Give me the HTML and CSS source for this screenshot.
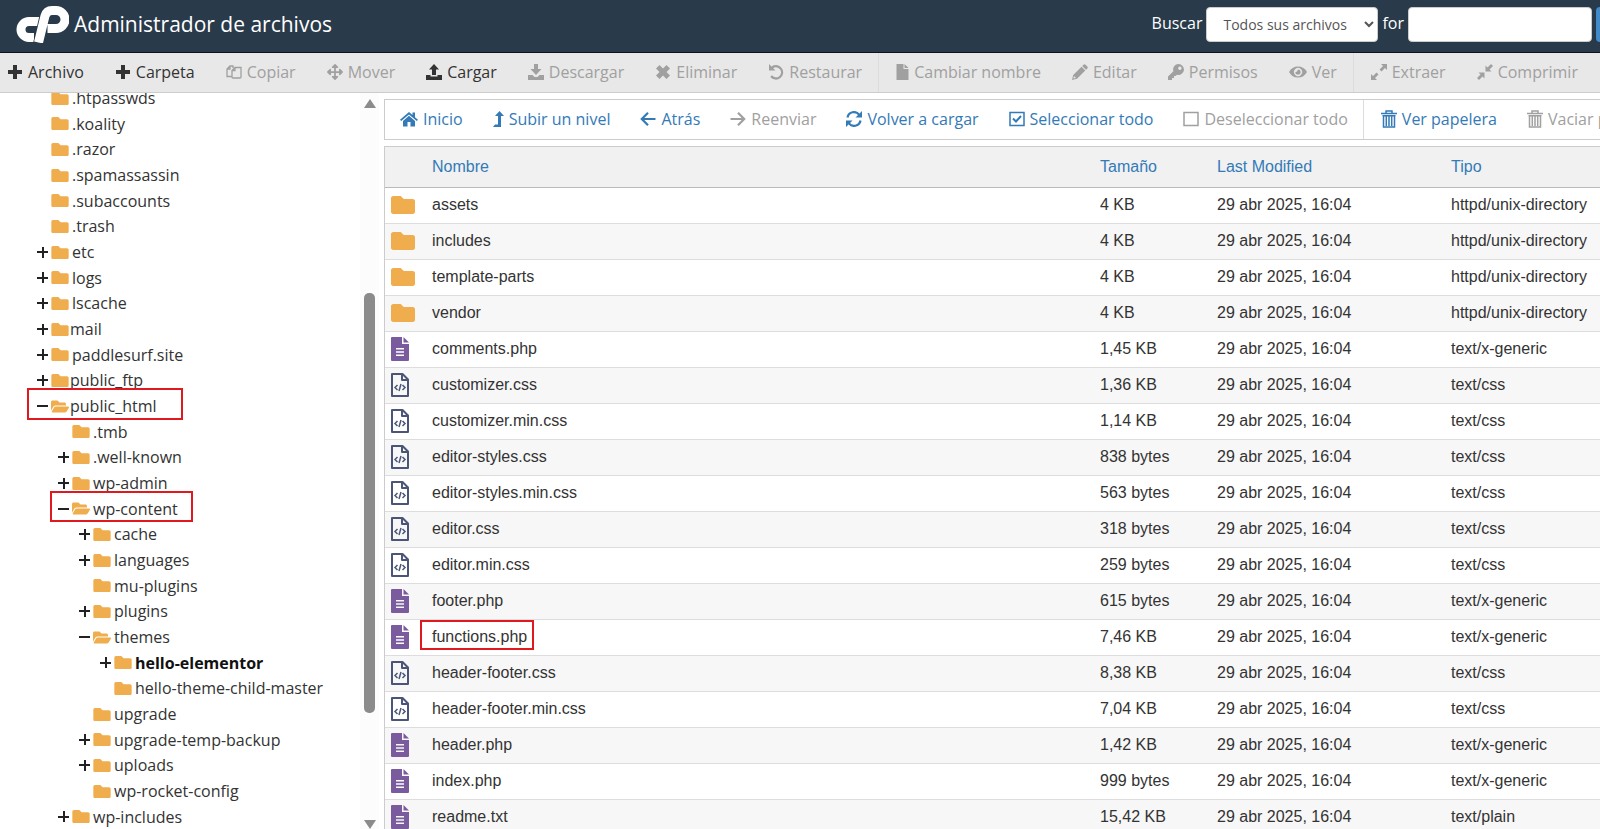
FILE: index.html
```html
<!DOCTYPE html>
<html lang="es">
<head>
  <meta charset="UTF-8">
  <meta name="viewport" content="width=device-width, initial-scale=1.0">
  <title>Administrador de archivos</title>
  <link rel="stylesheet" href="styles.css">
</head>
<body>
  <svg class="sprite" aria-hidden="true">
    <symbol id="plus" viewBox="0 0 16 16"><path d="M6 1h4v5h5v4h-5v5h-4v-5h-5v-4h5z"/></symbol>
    <symbol id="copy" viewBox="0 0 16 16"><path fill="none" stroke="currentColor" stroke-width="1.3" d="M6 12.5H1V5l3-3h3v2M4 2v3H1M9 3.5h6V13q0 1-1 1H7q-1 0-1-1V6.5zM9 3.5v3H6"/></symbol>
    <symbol id="move" viewBox="0 0 512 512"><path d="M352 426l-79 79c-9 9-25 9-34 0l-79-79c-15-15-4-41 17-41h51V284H127v51c0 21-26 32-41 17L7 273c-9-9-9-25 0-34l79-79c15-15 41-4 41 17v51h101V127h-51c-21 0-32-26-17-41l79-79c9-9 25-9 34 0l79 79c15 15 4 41-17 41h-51v101h101v-51c0-21 26-32 41-17l79 79c9 9 9 25 0 34l-79 79c-15 15-41 4-41-17v-51H284v101h51c21 0 32 26 17 41z"/></symbol>
    <symbol id="upload" viewBox="0 0 16 16"><path d="M8 0l5 5.5h-3V11H6V5.5H3zM0 11h4.5v1.5h7V11H16v5H0z"/></symbol>
    <symbol id="download" viewBox="0 0 16 16"><path d="M6 0h4v5h3.5L8 11 2.5 5H6zM0 11h4.5l2 2h3l2-2H16v5H0z"/></symbol>
    <symbol id="times" viewBox="0 0 16 16"><path d="M4.5 1L8 4.5 11.5 1 15 4.5 11.5 8 15 11.5 11.5 15 8 11.5 4.5 15 1 11.5 4.5 8 1 4.5z"/></symbol>
    <symbol id="undo" viewBox="0 0 16 16"><path d="M1 0v6.5h6.5L5.2 4.2A5 5 0 1 1 4 11.3L2.2 12.9A7.3 7.3 0 1 0 3.5 2.5z"/></symbol>
    <symbol id="file" viewBox="0 0 12 16"><path d="M0 0h7v5h5v11H0zM8 0l4 4H8z"/></symbol>
    <symbol id="pencil" viewBox="0 0 16 16"><path d="M11.5.7q1-1 2 0l1.8 1.8q1 1 0 2L14 5.8 10.2 2zM9.5 2.7l3.8 3.8L5 14.8 0 16l1.2-5zM2 12l-.6 2.6L4 14z"/></symbol>
    <symbol id="key" viewBox="0 0 16 16"><path fill-rule="evenodd" d="M10.5 0a5.5 5.5 0 1 1-1.500 10.8L7.5 12H6v2H4v2H0v-3.5l5.4-5.3A5.5 5.5 0 0 1 10.5 0zm1.3 2.5a1.7 1.7 0 1 0 .1 0z"/></symbol>
    <symbol id="eye" viewBox="0 0 18 16"><path fill-rule="evenodd" d="M9 2.5q6 0 9 5.5-3 5.5-9 5.5T0 8q3-5.5 9-5.5zM9 3.8a4.2 4.2 0 1 0 .1 0zM9 5.4a2.6 2.6 0 1 1-2.6 2.6q1.8.4 2.6-2.6z"/></symbol>
    <symbol id="expand" viewBox="0 0 16 16"><path d="M10 0h6v6l-2-2-3.5 3.5-2-2L12 2zM0 16v-6l2 2 3.5-3.5 2 2L4 14l2 2z"/></symbol>
    <symbol id="compress" viewBox="0 0 16 16"><path d="M8.5 7.5v-6l2 2L14 0l2 2-3.5 3.5 2 2zM7.5 8.5v6l-2-2L2 16l-2-2 3.5-3.5-2-2z"/></symbol>
    <symbol id="home" viewBox="0 0 18 16"><path d="M9 1l3.5 3V1.500H15v4.7l3 2.6-1.2 1.3L9 3.4 1.2 10.1 0 8.8zM9 4.8l6 5.1v5.6h-4.5V11h-3v4.5H3V9.9z"/></symbol>
    <symbol id="levelup" viewBox="0 0 11 16"><path d="M6.5 0L11 5H8v11H0l2-2.5h3V5H2z"/></symbol>
    <symbol id="left" viewBox="0 0 16 16"><path fill="none" stroke="currentColor" stroke-width="2.2" d="M15.5 8H2M8 1.8L1.8 8 8 14.2"/></symbol>
    <symbol id="right" viewBox="0 0 16 16"><path fill="none" stroke="currentColor" stroke-width="2.2" d="M.5 8H14M8 1.8L14.2 8 8 14.2"/></symbol>
    <symbol id="refresh" viewBox="0 0 16 16"><path fill="none" stroke="currentColor" stroke-width="2.2" d="M1.5 6.5A6.5 6.5 0 0 1 13.3 4M14.5 9.5A6.5 6.5 0 0 1 2.7 12"/><path d="M16 0v6.5H9.5zM0 16V9.5h6.5z"/></symbol>
    <symbol id="checked" viewBox="0 0 16 16"><path fill="none" stroke="currentColor" stroke-width="1.5" d="M1 1.5h14v13H1z"/><path fill="none" stroke="currentColor" stroke-width="2" d="M4 7.5l3 3 5-5.5"/></symbol>
    <symbol id="square" viewBox="0 0 16 16"><path fill="none" stroke="currentColor" stroke-width="1.5" d="M1 1.5h14v13H1z"/></symbol>
    <symbol id="trash" viewBox="0 0 16 18"><path fill="none" stroke="currentColor" stroke-width="1.5" d="M0 3.5h16M5 3V1h6v2M2.5 5v12h11V5M5.3 6v10M8 6v10M10.7 6v10M1.5 5.8h13"/></symbol>
    <symbol id="folder" viewBox="0 64 512 384"><path d="M464 128H272l-64-64H48C21 64 0 85 0 112v288c0 27 21 48 48 48h416c27 0 48-21 48-48V176c0-27-21-48-48-48z"/></symbol>
    <symbol id="folder-open" viewBox="0 64 576 384"><path d="M573 292l-73 124a64 64 0 0 1-55 32H45c-19 0-30-20-21-36l73-124a64 64 0 0 1 55-32h400c19 0 30 20 21 36zM152 224h328v-48c0-27-21-48-48-48H272l-64-64H48C21 64 0 85 0 112v278l69-118c17-30 49-48 83-48z"/></symbol>
    <symbol id="doc" viewBox="0 0 18 24"><path fill-rule="evenodd" d="M1 0h10v7h7v16q0 1-1 1H1q-1 0-1-1V1q0-1 1-1zM5 11v1.5h8V11zM5 14.2v1.5h8v-1.5zM5 17.5V19h8v-1.5zM12.5 0L18 5.5h-5.5z"/></symbol>
    <symbol id="code" viewBox="0 0 18 24"><path fill="none" stroke="currentColor" stroke-width="2" stroke-linejoin="round" d="M1 1h10.5L17 6.5V23H1zM11 1.5V7h5.5"/><path fill="none" stroke="currentColor" stroke-width="1.5" d="M6.5 12L4 14.5 6.5 17M11.5 12l2.5 2.5-2.5 2.5M10 11l-2 7"/></symbol>
  </svg>

  <header class="header">
    <svg class="logo" viewBox="0 0 53 37" aria-hidden="true">
      <path class="logo-line" d="M27 15.5H13a8 8 0 0 0 0 16h5"/>
      <path class="logo-gap" d="M22.5 38L29 10Q30.5 4.5 36 4.5"/>
      <path class="logo-line" d="M22.5 36.5L29 10Q30.5 4.5 36 4.5h4a9 9 0 0 1 0 18h-8.5"/>
    </svg>
    <h1>Administrador de archivos</h1>
    <form class="search">
      <label for="scope">Buscar</label>
      <select id="scope"><option>Todos sus archivos</option></select>
      <label for="query">for</label>
      <input type="text" id="query">
      <button type="button" aria-label="Ir"></button>
    </form>
  </header>

  <div class="toolbar" id="toolbar"></div>

  <div class="content">
    <aside class="sidebar">
      <ul class="tree" id="tree"></ul>
      <div class="scrollbar">
        <span class="arrow-up"></span>
        <span class="track"><span class="thumb"></span></span>
        <span class="arrow-down"></span>
      </div>
    </aside>
    <main class="main">
      <div class="nav" id="nav"></div>
      <table class="files">
        <thead>
          <tr>
            <th class="col-icon"></th>
            <th><a href="#">Nombre</a></th>
            <th class="col-size"><a href="#">Tamaño</a></th>
            <th class="col-date"><a href="#">Last Modified</a></th>
            <th class="col-type"><a href="#">Tipo</a></th>
          </tr>
        </thead>
        <tbody id="files"></tbody>
      </table>
    </main>
  </div>

  <script>
    // icon, label, state
    const toolbar = [
      ["plus", "Archivo"], ["plus", "Carpeta"], ["copy", "Copiar", "off"], ["move", "Mover", "off"],
      ["upload", "Cargar"], ["download", "Descargar", "off"], ["times", "Eliminar", "off"], ["undo", "Restaurar", "off"],
      "|",
      ["file", "Cambiar nombre", "off"], ["pencil", "Editar", "off"], ["key", "Permisos", "off"], ["eye", "Ver", "off"],
      "|",
      ["expand", "Extraer", "off"], ["compress", "Comprimir", "off"]
    ];
    const nav = [
      ["home", "Inicio"], ["levelup", "Subir un nivel"], ["left", "Atrás"], ["right", "Reenviar", "off"],
      ["refresh", "Volver a cargar"], ["checked", "Seleccionar todo"], ["square", "Deseleccionar todo", "off"],
      "|",
      ["trash", "Ver papelera"], ["trash", "Vaciar papelera", "off"]
    ];

    // level, toggle, name, extra class
    const tree = [
      [0, "", ".htpasswds"], [0, "", ".koality"], [0, "", ".razor"], [0, "", ".spamassassin"],
      [0, "", ".subaccounts"], [0, "", ".trash"], [0, "+", "etc"], [0, "+", "logs"], [0, "+", "lscache"],
      [0, "+", "mail", "tight"], [0, "+", "paddlesurf.site"], [0, "+", "public_ftp", "tight"],
      [0, "-", "public_html", "tight marked"], [1, "", ".tmb"], [1, "+", ".well-known"], [1, "+", "wp-admin"],
      [1, "-", "wp-content", "marked"], [2, "+", "cache"], [2, "+", "languages"], [2, "", "mu-plugins"],
      [2, "+", "plugins"], [2, "-", "themes"], [3, "+", "hello-elementor", "current"],
      [3, "", "hello-theme-child-master"], [2, "", "upgrade"], [2, "+", "upgrade-temp-backup"],
      [2, "+", "uploads"], [2, "", "wp-rocket-config"], [1, "+", "wp-includes"]
    ];

    const types = {
      folder: "httpd/unix-directory",
      php: "text/x-generic",
      css: "text/css",
      txt: "text/plain"
    };
    const files = [
      ["assets", "4 KB"], ["includes", "4 KB"], ["template-parts", "4 KB"], ["vendor", "4 KB"],
      ["comments.php", "1,45 KB"], ["customizer.css", "1,36 KB"], ["customizer.min.css", "1,14 KB"],
      ["editor-styles.css", "838 bytes"], ["editor-styles.min.css", "563 bytes"], ["editor.css", "318 bytes"],
      ["editor.min.css", "259 bytes"], ["footer.php", "615 bytes"], ["functions.php", "7,46 KB"],
      ["header-footer.css", "8,38 KB"], ["header-footer.min.css", "7,04 KB"], ["header.php", "1,42 KB"],
      ["index.php", "999 bytes"], ["readme.txt", "15,42 KB"]
    ];

    const icon = (name) => `<svg class="icon icon-${name}" aria-hidden="true"><use href="#${name}"/></svg>`;

    function renderButtons(id, items) {
      document.getElementById(id).innerHTML = items.map(item => {
        if (item === "|") return `<span class="sep"></span>`;
        const [ico, label, off] = item;
        return `<button type="button" ${off ? "disabled" : ""}>${icon(ico)}<span>${label}</span></button>`;
      }).join("");
    }

    renderButtons("toolbar", toolbar);
    renderButtons("nav", nav);

    document.getElementById("tree").innerHTML = tree.map(([level, toggle, name, cls = ""]) => `
      <li class="level-${level} ${cls}">
        <div class="node">
          <span class="toggle ${toggle === "+" ? "closed" : toggle === "-" ? "open" : ""}"></span>
          ${icon(toggle === "-" ? "folder-open" : "folder")}
          <a href="#">${name}</a>
        </div>
      </li>`).join("");

    document.getElementById("files").innerHTML = files.map(([name, size]) => {
      const ext = name.includes(".") ? name.split(".").pop() : "folder";
      const ico = ext === "folder" ? "folder" : ext === "css" ? "code" : "doc";
      const mark = name === "functions.php" ? "marked-file" : "";
      return `
        <tr>
          <td class="col-icon">${icon(ico)}</td>
          <td><span class="${mark}">${name}</span></td>
          <td>${size}</td>
          <td>29 abr 2025, 16:04</td>
          <td>${types[ext]}</td>
        </tr>`;
    }).join("");
  </script>
</body>
</html>
```
FILE: styles.css
```css
* {
  box-sizing: border-box;
}
body {
  margin: 0;
  height: 100vh;
  display: flex;
  flex-direction: column;
  overflow: hidden;
  background: #fff;
  color: #333;
  font-family: "Open Sans", sans-serif;
  font-size: 16px;
}
a {
  color: inherit;
  text-decoration: none;
}
.sprite {
  display: none;
}
.icon {
  width: 16px;
  height: 16px;
  fill: currentColor;
  flex: none;
}

/* header */
.header {
  display: flex;
  align-items: center;
  flex: none;
  height: 53px;
  padding: 0 0 4px 16px;
  background: #293a4a;
  border-bottom: 1px solid #0b1520;
  color: #fff;
}
.logo {
  width: 53px;
  height: 37px;
  margin-right: 5px;
}
.logo-line,
.logo-gap {
  fill: none;
  stroke: #fff;
  stroke-width: 9;
}
.logo-gap {
  stroke: #293a4a;
  stroke-width: 11;
}
h1 {
  margin: 0;
  font-size: 21px;
  font-weight: 400;
}
.search {
  display: flex;
  align-items: center;
  gap: 4px;
  margin-left: auto;
  margin-right: -36px;
}
.search label {
  padding-bottom: 2px;
}
.search select,
.search input {
  height: 35px;
  border: 1px solid #ccc;
  border-radius: 4px;
  background: #fff;
  color: #555;
  font-family: inherit;
  font-size: 14px;
}
.search select {
  width: 172px;
  padding: 0 12px;
}
.search input {
  width: 184px;
}
.search button {
  width: 40px;
  height: 35px;
  border: 0;
  border-radius: 4px;
  background: #428bca;
}

/* button bars */
.toolbar,
.nav {
  display: flex;
  flex: none;
  overflow: hidden;
}
.toolbar button,
.nav button {
  display: flex;
  align-items: center;
  flex: none;
  gap: 5px;
  padding: 0 15px 2px;
  border: 0;
  background: none;
  color: #333;
  font-family: inherit;
  font-size: 16px;
  white-space: nowrap;
}
.toolbar {
  height: 40px;
  background: #e8e8e8;
  border-bottom: 1px solid #ccc;
}
.toolbar button {
  padding-right: 16px;
}
.toolbar button:first-child {
  padding-left: 7px;
}
.toolbar button:disabled,
.nav button:disabled {
  color: #a0a0a0;
}
.toolbar .sep,
.nav .sep {
  flex: none;
  width: 1px;
  margin-right: 2px;
  background: #dcdcdc;
}
.nav {
  height: 41px;
  border: 1px solid #ccc;
  border-right: 0;
}
.nav button {
  color: #337ab7;
}
.toolbar .icon-file {
  width: 13px;
}
.toolbar .icon-eye,
.nav .icon-home {
  width: 18px;
}
.nav .icon-levelup {
  width: 11px;
}
.nav .icon-trash {
  height: 18px;
}

/* folder tree */
.content {
  display: flex;
  flex: 1;
  min-height: 0;
}
.sidebar {
  display: flex;
  flex: none;
  width: 384px;
  overflow: hidden;
}
.tree {
  display: grid;
  grid-template-rows: repeat(10, 26px 25px 26px);
  flex: 1;
  margin: -8px 0 0;
  padding: 0 0 0 37px;
  list-style: none;
}
.tree li {
  display: flex;
}
.level-1 {
  padding-left: 21px;
}
.level-2 {
  padding-left: 42px;
}
.level-3 {
  padding-left: 63px;
}
.node {
  position: relative;
  display: flex;
  align-items: center;
}
.node .icon {
  width: 18px;
  height: 13px;
  margin-right: 3px;
  color: #f0ad4e;
}
.tight .icon {
  margin-right: 1px;
}
.current {
  color: #111;
  font-weight: 700;
}
.toggle {
  width: 11px;
  height: 11px;
  margin-right: 3px;
}
.closed,
.open {
  background: linear-gradient(#222, #222) center / 11px 2px no-repeat;
}
.closed {
  background: linear-gradient(#222, #222) center / 11px 2px no-repeat,
    linear-gradient(#222, #222) center / 2px 11px no-repeat;
}
.marked .node::after,
.marked-file::after {
  content: "";
  position: absolute;
  border: 2px solid #e0191f;
}
.marked .node::after {
  inset: -5px -15px -1px -8px;
}
.tight.marked .node::after {
  right: -26px;
  left: -10px;
}

.scrollbar {
  display: flex;
  flex-direction: column;
  align-items: center;
  width: 19px;
  margin-right: 5px;
  padding-top: 6px;
  background: #fcfcfc;
}
.arrow-up,
.arrow-down {
  border: 6px solid transparent;
  border-top-width: 0;
  border-bottom: 9px solid #8b8b8b;
}
.arrow-down {
  border-top: 9px solid #8b8b8b;
  border-bottom-width: 0;
}
.track {
  display: flex;
  flex: 1;
  padding: 185px 0 107px;
}
.thumb {
  width: 11px;
  border-radius: 5px;
  background: #8b8b8b;
}

/* file list */
.main {
  flex: 1;
  min-width: 0;
  padding-top: 6px;
  overflow: hidden;
}
.files {
  width: 100%;
  margin-top: 6px;
  border: 1px solid #ccc;
  border-right: 0;
  border-collapse: separate;
  border-spacing: 0;
  table-layout: fixed;
  color: #333;
  font-family: "Liberation Sans", Arial, sans-serif;
  font-size: 16px;
  white-space: nowrap;
}
.files th {
  height: 41px;
  padding: 0;
  background: #f1f1f1;
  border-bottom: 1px solid #bbb;
  color: #337ab7;
  font-weight: 400;
  text-align: left;
}
.files td {
  height: 36px;
  padding: 0 0 2px;
  border-bottom: 1px solid #ddd;
}
.files tbody tr:nth-child(even) {
  background: #f7f7f7;
}
.files .col-icon {
  width: 47px;
  padding-left: 6px;
}
.col-size {
  width: 117px;
}
.col-date {
  width: 234px;
}
.col-type {
  width: 149px;
}
.files .icon {
  display: block;
  width: 18px;
  height: 24px;
}
.files .icon-folder {
  width: 24px;
  height: 18px;
  color: #f0ad4e;
}
.files .icon-doc {
  color: #7a5c9e;
}
.files .icon-code {
  color: #4a5578;
}
.marked-file {
  position: relative;
}
.marked-file::after {
  inset: -8px -7px -5px -12px;
}
```
